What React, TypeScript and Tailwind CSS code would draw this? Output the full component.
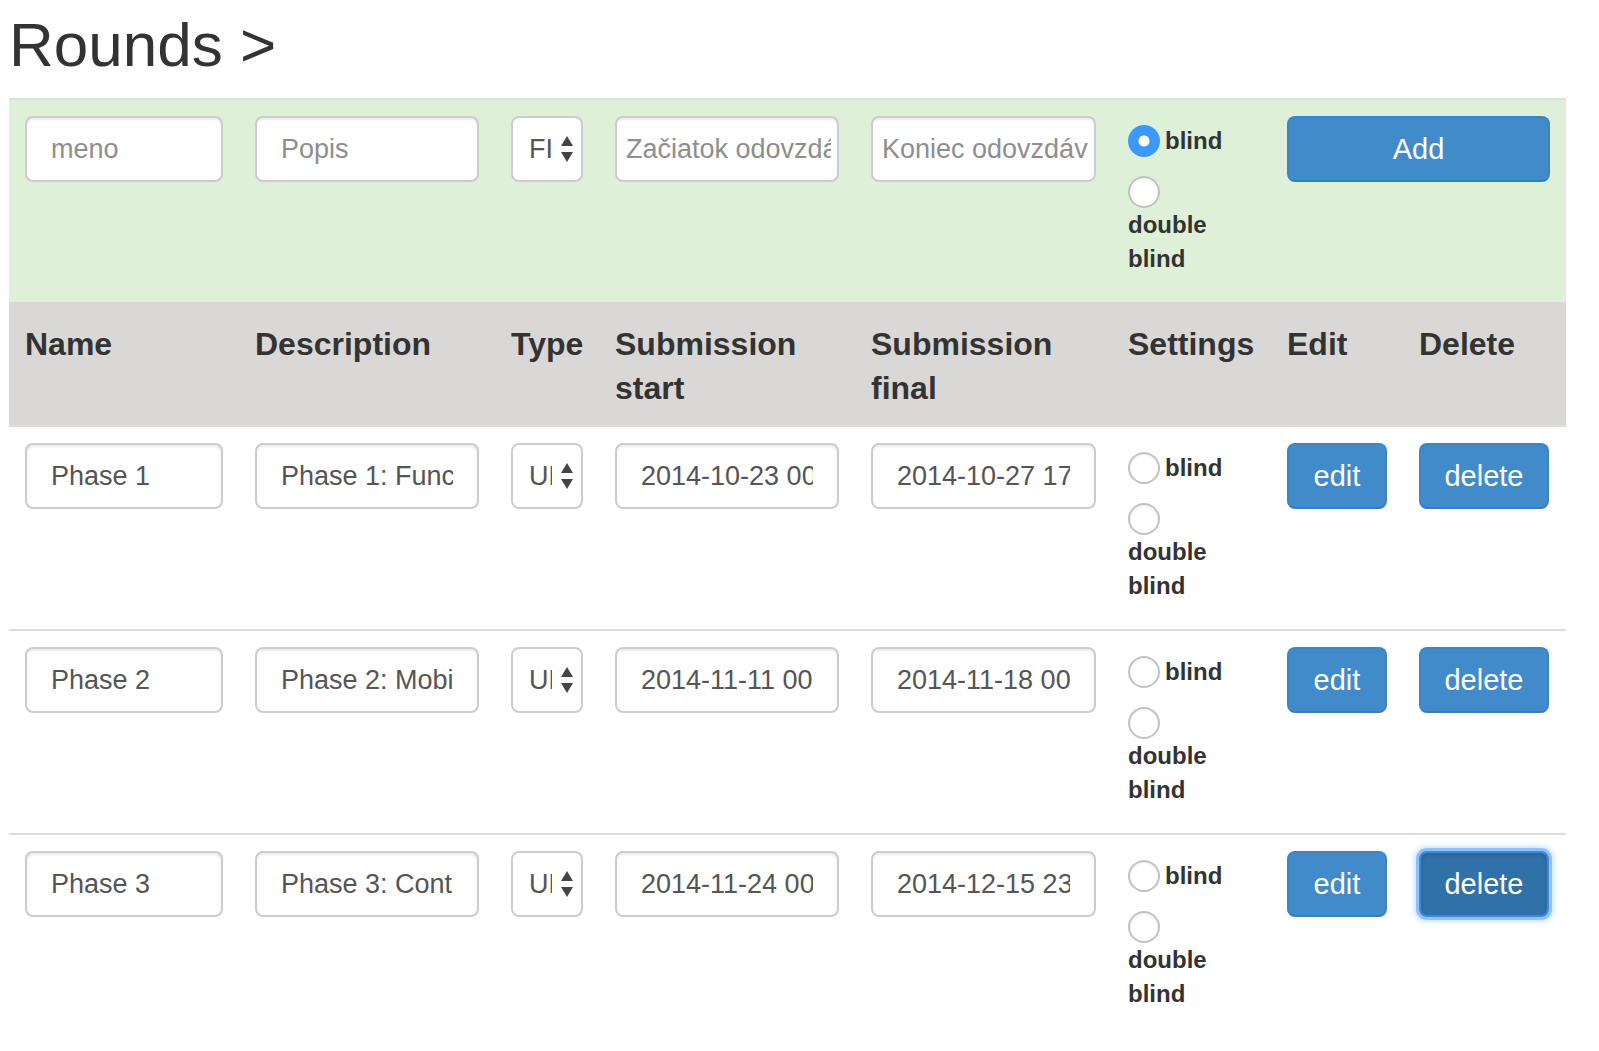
import { useState } from 'react'

interface Round {
  id: number
  name: string
  description: string
  type: 'FILE' | 'URL'
  start: string
  final: string
  setting: 'blind' | 'double'
}

const ROUNDS: Round[] = [
  {
    id: 1,
    name: 'Phase 1',
    description: 'Phase 1: Functional prototype',
    type: 'URL',
    start: '2014-10-23 00:00:00',
    final: '2014-10-27 17:00:00',
    setting: 'blind',
  },
  {
    id: 2,
    name: 'Phase 2',
    description: 'Phase 2: Mobile prototype',
    type: 'URL',
    start: '2014-11-11 00:00:00',
    final: '2014-11-18 00:00:00',
    setting: 'blind',
  },
  {
    id: 3,
    name: 'Phase 3',
    description: 'Phase 3: Content and design',
    type: 'URL',
    start: '2014-11-24 00:00:00',
    final: '2014-12-15 23:59:00',
    setting: 'blind',
  },
]

const inputCls =
  'block w-full h-[66px] rounded-[8px] border-2 border-[#cccccc] bg-white text-[27px] text-[#555] placeholder:text-[#8e8e8e] shadow-[inset_0_2px_2px_rgba(0,0,0,0.075)] outline-none'

const radioCls =
  'appearance-none block shrink-0 w-[32px] h-[32px] rounded-full border-2 border-[#c2c2c2] bg-white shadow-[inset_0_1px_2px_rgba(0,0,0,0.08)] checked:border-[#3b99fc] checked:shadow-none checked:bg-[radial-gradient(circle,#ffffff_5px,#3b99fc_6px)]'

const tdCls = 'px-[16px] pt-[16px] pb-[16px] align-top border-t-2 border-[#dddddd]'

const btnCls =
  'h-[66px] rounded-[8px] border-2 border-[#3d85c6] border-b-[#357ebd] bg-[#428bca] text-[29px] leading-none text-white'

function TypeSelect({ value }: { value: string }) {
  return (
    <div className="relative">
      <select
        defaultValue={value}
        className="appearance-none block w-full h-[66px] rounded-[8px] border-2 border-[#cccccc] bg-white pl-[16px] pr-[29px] text-[27px] text-[#555] outline-none"
      >
        <option value="FILE">FILE</option>
        <option value="URL">URL</option>
      </select>
      <svg
        className="pointer-events-none absolute right-[10px] top-1/2 -translate-y-1/2 w-[12px] h-[26px]"
        viewBox="0 0 12 26"
      >
        <path d="M6 0 L12 10 L0 10 Z" fill="#444" />
        <path d="M0 16 L12 16 L6 26 Z" fill="#444" />
      </svg>
    </div>
  )
}

function Settings({ name, value }: { name: string; value: 'blind' | 'double' | null }) {
  return (
    <div className="mt-[8px] mb-[10px] text-[24px] leading-[34px] font-bold text-[#333]">
      <label className="flex items-center gap-[5px] h-[34px]">
        <input type="radio" name={name} className={radioCls} defaultChecked={value === 'blind'} />
        blind
      </label>
      <label className="block mt-[18px]">
        <input type="radio" name={name} className={radioCls} defaultChecked={value === 'double'} />
        double blind
      </label>
    </div>
  )
}

function RoundRow({ round, onDelete }: { round: Round; onDelete: (id: number) => void }) {
  const active = round.id === 3
  return (
    <tr>
      <td className={tdCls}>
        <input className={`${inputCls} px-[24px]`} defaultValue={round.name} />
      </td>
      <td className={tdCls}>
        <input className={`${inputCls} px-[24px]`} defaultValue={round.description} />
      </td>
      <td className={tdCls}>
        <TypeSelect value={round.type} />
      </td>
      <td className={tdCls}>
        <input className={`${inputCls} px-[24px]`} defaultValue={round.start} />
      </td>
      <td className={tdCls}>
        <input className={`${inputCls} px-[24px]`} defaultValue={round.final} />
      </td>
      <td className={tdCls}>
        <Settings name={`setting-${round.id}`} value={null} />
      </td>
      <td className={tdCls}>
        <button className={`${btnCls} w-[100px]`}>edit</button>
      </td>
      <td className={tdCls}>
        <button
          onClick={() => onDelete(round.id)}
          className={
            active
              ? 'w-[130px] h-[66px] rounded-[8px] border-2 border-[#3f8ad8] bg-[#3071a9] text-[29px] leading-none text-white shadow-[0_0_0_3px_#8fc0f6,0_0_5px_5px_rgba(140,190,245,0.45),inset_0_3px_5px_rgba(0,0,0,0.12)]'
              : `${btnCls} w-[130px]`
          }
        >
          delete
        </button>
      </td>
    </tr>
  )
}

export default function App() {
  const [rounds, setRounds] = useState(ROUNDS)

  return (
    <div className="min-h-screen bg-white pl-[9px] pt-[11px] font-['Liberation_Sans',Arial,sans-serif] text-[#333]">
      <h1 className="text-[62px] leading-[68px] font-medium mb-[19px]">Rounds &gt;</h1>

      <table className="table-fixed border-collapse w-[1557px]">
        <colgroup>
          <col className="w-[230px]" />
          <col className="w-[256px]" />
          <col className="w-[104px]" />
          <col className="w-[256px]" />
          <col className="w-[257px]" />
          <col className="w-[159px]" />
          <col className="w-[132px]" />
          <col className="w-[163px]" />
        </colgroup>
        <thead>
          {/* new round form */}
          <tr className="bg-[#dff0d8]">
            <td className={tdCls}>
              <input className={`${inputCls} px-[24px]`} placeholder="meno" />
            </td>
            <td className={tdCls}>
              <input className={`${inputCls} px-[24px]`} placeholder="Popis" />
            </td>
            <td className={tdCls}>
              <TypeSelect value="FILE" />
            </td>
            <td className={tdCls}>
              <input className={`${inputCls} pl-[9px] pr-[6px]`} placeholder="Začiatok odovzdávania" />
            </td>
            <td className={tdCls}>
              <input className={`${inputCls} pl-[9px] pr-[6px]`} placeholder="Koniec odovzdávania" />
            </td>
            <td className={tdCls}>
              <Settings name="setting-new" value="blind" />
            </td>
            <td className={tdCls} colSpan={2}>
              <button className={`${btnCls} w-full`}>Add</button>
            </td>
          </tr>
          <tr className="bg-[#d9d8d7]">
            {['Name', 'Description', 'Type', 'Submission start', 'Submission final', 'Settings', 'Edit', 'Delete'].map(h => (
              <th
                key={h}
                className="px-[16px] pt-[18px] pb-[15px] text-left align-top text-[32px] leading-[44px] font-bold border-t-2 border-[#d9d8d7]"
              >
                {h}
              </th>
            ))}
          </tr>
        </thead>
        <tbody>
          {rounds.map(r => (
            <RoundRow key={r.id} round={r} onDelete={id => setRounds(rounds.filter(x => x.id !== id))} />
          ))}
        </tbody>
      </table>
    </div>
  )
}
